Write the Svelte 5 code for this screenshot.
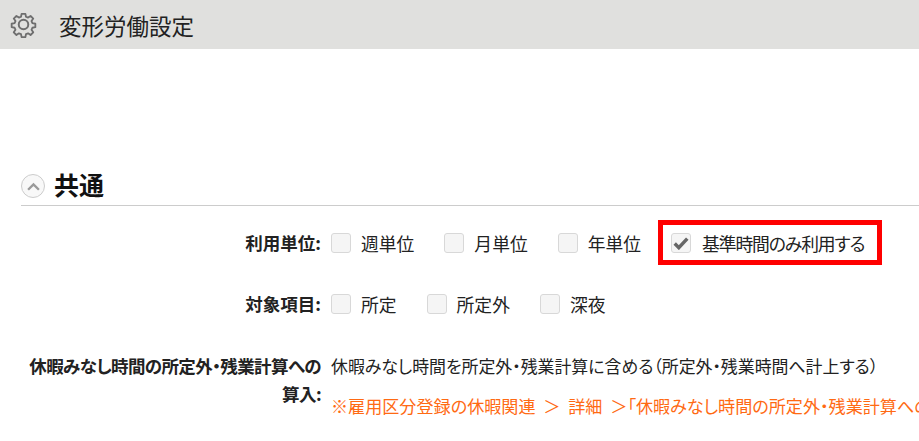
<script>
const units = ['週単位', '月単位', '年単位'];
const targets = ['所定', '所定外', '深夜'];
</script>

<main>
    <header class="titlebar">
        <svg class="gear" viewBox="0 0 26 26" width="27" height="27" fill="none" stroke="#6e6e6e" stroke-width="1.9" stroke-linejoin="round">
            <path d="M11 1.8h4l.6 3.1 2.2.9 2.6-1.8 2.8 2.8-1.8 2.6.9 2.2 3.1.6v3.6l-3.1.6-.9 2.2 1.8 2.6-2.8 2.8-2.6-1.8-2.2.9-.6 3.1h-4l-.6-3.1-2.2-.9-2.6 1.8-2.8-2.8 1.8-2.6-.9-2.2-3.1-.6v-3.6l3.1-.6.9-2.2-1.8-2.6 2.8-2.8 2.6 1.8 2.2-.9z" transform="translate(13 13) scale(.92) translate(-13 -13)"/>
            <circle cx="13" cy="13" r="4.6"/>
        </svg>
        <h1>変形労働設定</h1>
    </header>

    <section class="group">
        <div class="group-head">
            <span class="toggle">
                <svg viewBox="0 0 12 8" width="13" height="9" fill="none" stroke="#9a9a9a" stroke-width="2.2"><path d="M1 7l5-5 5 5"/></svg>
            </span>
            <h2>共通</h2>
        </div>

        <div class="row first">
            <div class="label">利用単位:</div>
            <div class="options">
                {#each units as u}
                    <label class="opt"><span class="box"></span>{u}</label>
                {/each}
                <label class="opt marked">
                    <span class="box">
                        <svg viewBox="0 0 14 12" width="16" height="14"><path d="M1.5 6.5l3.6 3.6 7.4-8" fill="none" stroke="#666" stroke-width="3"/></svg>
                    </span>基準時間のみ利用する
                </label>
            </div>
        </div>

        <div class="row second">
            <div class="label">対象項目:</div>
            <div class="options">
                {#each targets as t}
                    <label class="opt"><span class="box"></span>{t}</label>
                {/each}
            </div>
        </div>

        <div class="row third">
            <div class="label wide">休暇みなし時間の所定外・残業計算への算入:</div>
            <div class="notes">
                <p>休暇みなし時間を所定外・残業計算に含める（所定外・残業時間へ計上する）</p>
                <p class="warn">※雇用区分登録の休暇関連 ＞ 詳細 ＞「休暇みなし時間の所定外・残業計算への</p>
            </div>
        </div>
    </section>
</main>

<style>
    :global(body) {
        margin: 0;
        background: #fff;
    }
    main {
        width: 919px;
        height: 441px;
        overflow: hidden;
        font-family: "Noto Sans CJK JP", "Liberation Sans", sans-serif;
        font-size: 17.5px;
        font-feature-settings: "palt";
        color: #222;
    }
    .titlebar {
        height: 49px;
        background: #e0e0de;
        display: flex;
        align-items: center;
        padding-left: 10px;
        box-sizing: border-box;
    }
    .gear {
        margin-right: 22px;
    }
    h1 {
        margin: 0;
        font-size: 22.5px;
        font-weight: 400;
        font-feature-settings: normal;
        color: #222;
    }
    .group {
        margin: 120px 0 0 21px;
    }
    .group-head {
        display: flex;
        align-items: center;
        height: 36px;
        border-bottom: 1px solid #ccc;
    }
    .toggle {
        width: 22px;
        height: 22px;
        border: 1px solid #ccc;
        border-radius: 50%;
        display: flex;
        align-items: center;
        justify-content: center;
        margin: 0 9px 2px 0;
        background: #f8f8f8;
    }
    h2 {
        margin: 0 0 5px;
        font-size: 25px;
        line-height: 31px;
        font-weight: 700;
        color: #111;
    }
    .row {
        display: flex;
        white-space: nowrap;
    }
    .first {
        margin-top: 23px;
        height: 61px;
    }
    .second {
        height: 62px;
    }
    .label {
        width: 300px;
        text-align: right;
        font-weight: 700;
        line-height: 28px;
        flex: none;
    }
    .label.wide {
        white-space: normal;
        letter-spacing: -0.6px;
    }
    .options {
        display: flex;
        align-items: flex-start;
        margin-left: 10px;
        gap: 30px;
    }
    .opt {
        display: flex;
        align-items: center;
        height: 28px;
        font-size: 17.8px;
    }
    .box {
        width: 20px;
        height: 20px;
        box-sizing: border-box;
        border: 1px solid #d8d8d8;
        border-radius: 3px;
        background: #f5f5f5;
        margin-right: 10px;
        display: flex;
        align-items: center;
        justify-content: center;
        flex: none;
    }
    .marked {
        border: 5px solid #f00;
        height: 45px;
        box-sizing: border-box;
        padding: 0 13px 0 8px;
        margin: -9px 0 0 -13px;
        letter-spacing: -1.1px;
    }
    .marked .box {
        margin-right: 11px;
    }
    .notes {
        margin-left: 10px;
        font-size: 16.9px;
    }
    .notes p {
        margin: 0 0 12px;
        line-height: 28px;
    }
    .warn {
        color: #ff6a13;
        font-size: 17.1px;
        word-spacing: 4px;
    }
</style>
